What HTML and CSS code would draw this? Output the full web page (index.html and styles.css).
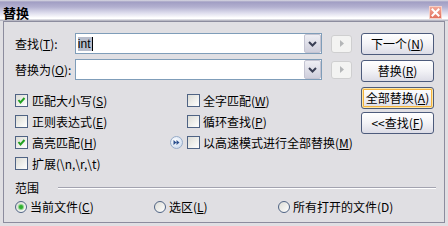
FILE: index.html
```html
<!DOCTYPE html>
<html>
<head>
<meta charset="utf-8">
<link rel="stylesheet" href="styles.css">
</head>
<body>
<div class="win">
  <div class="titlebar">
    <span class="title-text">替换</span>
    <span class="close"><svg width="13" height="13" viewBox="0 0 13 13"><path d="M3.5 3.5 L9.5 9.5 M9.5 3.5 L3.5 9.5" stroke="#fff" stroke-width="2" stroke-linecap="square"/></svg></span>
  </div>
  <div class="panel">
    <div class="top">
      <div class="left">
        <div class="field-row">
          <span class="flabel">查找(<u>T</u>):</span>
          <div class="combo">
            <span class="ctext"><span class="sel">int</span><span class="caret"></span></span>
            <span class="dd"><svg width="9" height="6" viewBox="0 0 9 6"><path d="M1 1 L4.5 4.5 L8 1" fill="none" stroke="#3a3f55" stroke-width="2"/></svg></span>
          </div>
          <span class="arrowbtn"><svg width="4" height="7" viewBox="0 0 4 7"><path d="M0 0 L4 3.5 L0 7 Z" fill="#b4b6b8"/></svg></span>
        </div>
        <div class="field-row">
          <span class="flabel">替换为(<u>O</u>):</span>
          <div class="combo">
            <span class="ctext"></span>
            <span class="dd"><svg width="9" height="6" viewBox="0 0 9 6"><path d="M1 1 L4.5 4.5 L8 1" fill="none" stroke="#3a3f55" stroke-width="2"/></svg></span>
          </div>
          <span class="arrowbtn"><svg width="4" height="7" viewBox="0 0 4 7"><path d="M0 0 L4 3.5 L0 7 Z" fill="#b4b6b8"/></svg></span>
        </div>
        <div class="opts">
          <label class="opt"><span class="cb"><svg width="11" height="11" viewBox="0 0 11 11"><path d="M2.5 5 L4.5 7.5 L8.5 3" fill="none" stroke="#21a121" stroke-width="2"/></svg></span><span class="t">匹配大小写(<u>S</u>)</span></label>
          <label class="opt c2"><span class="cb"></span><span class="t">全字匹配(<u>W</u>)</span></label>
          <label class="opt"><span class="cb"></span><span class="t">正则表达式(<u>E</u>)</span></label>
          <label class="opt c2"><span class="cb"></span><span class="t">循环查找(<u>P</u>)</span></label>
          <label class="opt"><span class="cb"><svg width="11" height="11" viewBox="0 0 11 11"><path d="M2.5 5 L4.5 7.5 L8.5 3" fill="none" stroke="#21a121" stroke-width="2"/></svg></span><span class="t">高亮匹配(<u>H</u>)</span></label>
          <label class="opt c2 withicon"><span class="ff"><svg width="13" height="13" viewBox="0 0 13 13"><path d="M3.5 4 L6.5 6.5 L3.5 9 Z M6.5 4 L9.5 6.5 L6.5 9 Z" fill="#2b4f8e"/></svg></span><span class="cb"></span><span class="t">以高速模式进行全部替换(<u>M</u>)</span></label>
          <label class="opt"><span class="cb"></span><span class="t">扩展(\n,\r,\t)</span></label>
        </div>
      </div>
      <div class="btns">
        <span class="btn"><span class="t">下一个(<u>N</u>)</span></span>
        <span class="btn"><span class="t">替换(<u>R</u>)</span></span>
        <span class="btn focus"><span class="t">全部替换(<u>A</u>)</span></span>
        <span class="btn last"><span class="t">&lt;&lt;查找(<u>F</u>)</span></span>
      </div>
    </div>
    <div class="range"><span>范围</span><span class="etch"></span></div>
    <div class="radios">
      <label class="ritem r1"><span class="rd on"></span><span class="t">当前文件(<u>C</u>)</span></label>
      <label class="ritem r2"><span class="rd"></span><span class="t">选区(<u>L</u>)</span></label>
      <label class="ritem"><span class="rd"></span><span class="t">所有打开的文件(D)</span></label>
    </div>
  </div>
</div>
</body>
</html>
```
FILE: styles.css
```css
* { box-sizing: border-box; }
html, body { margin: 0; padding: 0; }
body {
  width: 448px;
  height: 226px;
  overflow: hidden;
  background: #e0dfe3;
  font-family: "Noto Sans CJK SC", sans-serif;
  font-size: 12px;
  color: #000;
}
u { text-decoration: underline; text-underline-offset: 1px; }
.t { white-space: nowrap; }
.win {
  width: 448px;
  height: 226px;
  background: #e0dfe3;
}
.titlebar {
  height: 21px;
  display: flex;
  justify-content: space-between;
  align-items: flex-start;
  background: linear-gradient(to bottom, #dcdce4 0px, #a19ec3 2px, #b3b0d0 7px, #dedded 13px, #ffffff 18px, #ffffff 19px, #b8b8c4 20px);
}
.title-text {
  font-weight: bold;
  font-size: 13px;
  line-height: 13px;
  margin: 6px 0 0 3px;
}
.close {
  width: 13px;
  height: 13px;
  margin: 6px 6px 0 0;
  background: linear-gradient(to bottom, #f3a898, #e2725f);
  border: 1px solid #f6d0c8;
  display: flex;
}
.close svg { margin: -1px; }
.panel {
  margin-left: 3px;
  width: 442px;
  height: 202px;
  border: 1px solid #8c8c9e;
  padding: 11px 10px 0 11px;
}
.top { display: flex; gap: 9px; }
.left { width: 337px; }
.field-row { display: flex; align-items: center; height: 21px; }
.field-row + .field-row { margin-top: 5px; }
.flabel { width: 60px; line-height: 16px; white-space: nowrap; }
.combo {
  width: 248px;
  height: 21px;
  border: 1px solid #7f9db9;
  background: #fff;
  display: flex;
  align-items: center;
  justify-content: space-between;
}
.ctext { padding-left: 2px; display: flex; align-items: center; }
.sel {
  font-family: "Liberation Sans", sans-serif;
  font-size: 12px;
  line-height: 14px;
  background: #b6bccb;
  padding-right: 1px;
}
.caret { width: 1px; height: 14px; background: #000; }
.dd {
  width: 17px;
  height: 19px;
  border-radius: 2px;
  background: linear-gradient(to bottom, #eeeef4, #cfcfdc);
  border: 1px solid #c4c4d2;
  display: flex;
  align-items: center;
  justify-content: center;
}
.arrowbtn {
  margin-left: 9px;
  width: 21px;
  height: 18px;
  border: 1px solid #cfcfd0;
  border-radius: 3px;
  background: #f3f3f2;
  display: flex;
  align-items: center;
  justify-content: center;
}
.opts {
  display: grid;
  grid-template-columns: 155px 182px;
  grid-auto-rows: 21px;
  margin-top: 10px;
}
.opt { display: flex; align-items: center; gap: 4px; line-height: 16px; }
.opt.c2 { padding-left: 17px; }
.opt.c2.withicon { padding-left: 0; }
.opt.c2 .cb { margin-right: -1px; }
.cb {
  width: 13px;
  height: 13px;
  border: 1px solid #4f6384;
  background: linear-gradient(135deg, #dcdcd6, #ffffff);
  display: flex;
  flex: none;
}
.ff {
  width: 13px;
  height: 13px;
  border-radius: 50%;
  border: 1px solid #97acc9;
  background: radial-gradient(circle at 40% 35%, #ffffff, #c3d4ec);
  display: flex;
  flex: none;
}
.ff svg { margin: -1px; }
.btns { width: 73px; display: flex; flex-direction: column; gap: 5px; }
.btn {
  height: 22px;
  border: 1px solid #4d5b7c;
  border-radius: 3px;
  background: linear-gradient(to bottom, #ffffff 0%, #f2f2f6 50%, #dcdce6 100%);
  display: flex;
  align-items: center;
  justify-content: center;
  line-height: 16px;
}
.btn.focus {
  box-shadow: inset 0 0 0 1px #fce7a8, inset 0 0 0 2px #f3b33f;
}
.btn.last { margin-top: -2px; }
.range {
  display: flex;
  align-items: center;
  height: 14px;
  line-height: 14px;
  margin-top: 7px;
}
.etch {
  flex: 1;
  height: 2px;
  border-top: 1px solid #a3a3b0;
  border-bottom: 1px solid #ffffff;
  margin-left: 19px;
  margin-right: -2px;
}
.radios {
  display: flex;
  align-items: center;
  height: 16px;
  margin-top: 4px;
}
.ritem { display: flex; align-items: center; gap: 3px; line-height: 16px; }
.ritem.r1 { width: 139px; }
.ritem.r2 { width: 124px; }
.rd {
  width: 12px;
  height: 12px;
  border-radius: 50%;
  border: 1px solid #4f6384;
  background: linear-gradient(135deg, #dcdcd6, #ffffff);
  flex: none;
  display: flex;
  align-items: center;
  justify-content: center;
}
.rd.on::after {
  content: "";
  width: 4px;
  height: 4px;
  border-radius: 50%;
  background: #2fae2f;
  box-shadow: 0 0 1px 1px #7fd07f;
}
```
